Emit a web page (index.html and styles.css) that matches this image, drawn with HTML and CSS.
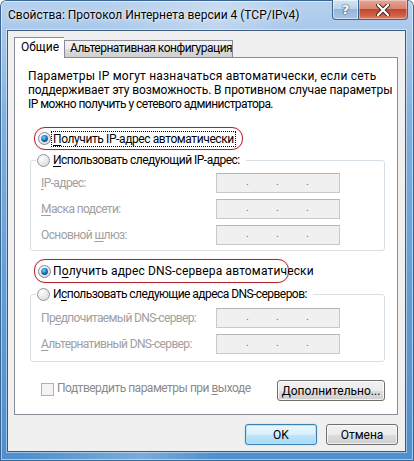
FILE: index.html
```html
<!DOCTYPE html>
<html lang="ru">
<head>
<meta charset="utf-8">
<link rel="stylesheet" href="styles.css">
</head>
<body>
<div class="window">
  <div class="titlebar">
    <div class="title">Свойства: Протокол Интернета версии 4 (TCP/IPv4)</div>
    <div class="caption-btns">
      <div class="cbtn help">?</div>
      <div class="cbtn close">
        <svg width="14" height="12" viewBox="0 0 14 12"><path d="M2 1 L12 11 M12 1 L2 11" stroke="#3a1a14" stroke-width="4" stroke-linecap="round"/><path d="M2 1 L12 11 M12 1 L2 11" stroke="#fff" stroke-width="2.4" stroke-linecap="round"/></svg>
      </div>
    </div>
  </div>
  <div class="client">
    <div class="tabs">
      <div class="tab active">Общие</div>
      <div class="tab alt">Альтернативная конфигурация</div>
    </div>
    <div class="panel">
      <p class="desc"><span class="l1">Параметры IP могут назначаться автоматически, если сеть</span><br><span class="l2">поддерживает эту возможность. В противном случае параметры</span><br><span class="l3">IP можно получить у сетевого администратора.</span></p>

      <div class="hl hl1">
        <svg class="radio" width="13" height="13" viewBox="0 0 13 13"><defs><radialGradient id="rg1" cx="0.35" cy="0.3" r="0.8"><stop offset="0" stop-color="#ffffff"/><stop offset="1" stop-color="#d8d8d8"/></radialGradient><radialGradient id="dot1" cx="0.4" cy="0.35" r="0.7"><stop offset="0" stop-color="#7fd0ff"/><stop offset="0.6" stop-color="#1a78c2"/><stop offset="1" stop-color="#0a3d6e"/></radialGradient></defs><circle cx="6.5" cy="6.5" r="6" fill="url(#rg1)" stroke="#7e8a96"/><circle cx="6.5" cy="6.5" r="3.4" fill="url(#dot1)"/></svg>
        <span class="focus"><u>П</u>олучить IP-адрес автоматически</span>
      </div>

      <div class="group g1">
        <div class="legend">
          <svg class="radio" width="13" height="13" viewBox="0 0 13 13"><circle cx="6.5" cy="6.5" r="6" fill="url(#rg1)" stroke="#8f989f"/></svg>
          <span class="ltext"><u>И</u>спользовать следующий IP-адрес:</span>
        </div>
        <div class="field first"><span class="flabel"><u>I</u>P-адрес:</span><div class="ip"><span>.</span><span>.</span><span>.</span></div></div>
        <div class="field"><span class="flabel"><u>М</u>аска подсети:</span><div class="ip"><span>.</span><span>.</span><span>.</span></div></div>
        <div class="field"><span class="flabel">Основной <u>ш</u>люз:</span><div class="ip"><span>.</span><span>.</span><span>.</span></div></div>
      </div>

      <div class="hl hl2">
        <svg class="radio" width="13" height="13" viewBox="0 0 13 13"><circle cx="6.5" cy="6.5" r="6" fill="url(#rg1)" stroke="#7e8a96"/><circle cx="6.5" cy="6.5" r="3.4" fill="url(#dot1)"/></svg>
        <span class="rtext">П<u>о</u>лучить адрес DNS-сервера автоматически</span>
      </div>

      <div class="group g2">
        <div class="legend">
          <svg class="radio" width="13" height="13" viewBox="0 0 13 13"><circle cx="6.5" cy="6.5" r="6" fill="url(#rg1)" stroke="#8f989f"/></svg>
          <span class="ltext">И<u>с</u>пользовать следующие адреса DNS-серверов:</span>
        </div>
        <div class="field first"><span class="flabel">Пр<u>е</u>дпочитаемый DNS-сервер:</span><div class="ip"><span>.</span><span>.</span><span>.</span></div></div>
        <div class="field"><span class="flabel"><u>А</u>льтернативный DNS-сервер:</span><div class="ip"><span>.</span><span>.</span><span>.</span></div></div>
      </div>

      <div class="bottom-row">
        <span class="check"></span>
        <span class="clabel">Подтвердить параметры при <u>в</u>ыходе</span>
        <div class="btn adv"><u>Д</u>ополнительно...</div>
      </div>
    </div>
    <div class="dlg-btns">
      <div class="btn default">OK</div>
      <div class="btn">Отмена</div>
    </div>
  </div>
</div>
</body>
</html>
```
FILE: styles.css
```css
* { box-sizing: border-box; }
html, body { margin: 0; padding: 0; }
body {
  width: 414px;
  height: 461px;
  overflow: hidden;
  font-family: Roboto, "Noto Sans", sans-serif;
  font-size: 12px;
  color: #000;
  background: #fff;
}
u { text-decoration: underline; text-underline-offset: 2px; }

.window {
  width: 414px;
  height: 461px;
  display: flex;
  flex-direction: column;
  padding: 0 8px 9px 7px;
  border-radius: 6px 6px 0 0;
  background:
    linear-gradient(100deg, rgba(255,255,255,0) 20%, rgba(255,255,255,0.25) 45%, rgba(255,255,255,0) 60%),
    linear-gradient(to bottom, #b6d1ee 0px, #a9c8ea 30px, #7fb0e0 120px, #5f9dd6 300px, #4e8fcd 461px);
  box-shadow: inset 0 0 0 1px #3b6591, inset 0 0 0 2px rgba(255,255,255,0.5);
}

.titlebar {
  height: 30px;
  display: flex;
  align-items: flex-start;
  flex: none;
}
.title {
  margin-left: 1px;
  padding-top: 7px;
  line-height: 16px;
  white-space: nowrap;
  text-shadow: 0 0 6px rgba(255,255,255,0.9), 0 0 2px rgba(255,255,255,0.9);
}
.caption-btns {
  margin-left: auto;
  margin-right: -2px;
  display: flex;
}
.cbtn {
  height: 20px;
  display: flex;
  align-items: center;
  justify-content: center;
  border: 1px solid #41648e;
  border-top: none;
}
.help {
  width: 27px;
  border-radius: 0 0 0 4px;
  background: linear-gradient(to bottom, #d3e3f3 0%, #bdd3ea 45%, #94b6da 50%, #a6c6e6 100%);
  color: #fff;
  font-family: "DejaVu Sans", sans-serif;
  font-weight: bold;
  font-size: 13px;
  text-shadow: 0 0 2px #23456b, 0 0 1px #23456b;
  box-shadow: inset 0 0 0 1px rgba(255,255,255,0.5);
}
.close {
  width: 49px;
  border-left: none;
  border-radius: 0 0 4px 0;
  background: linear-gradient(to bottom, #e4a898 0%, #d88470 45%, #c4452e 50%, #d0644c 85%, #e08a70 100%);
  box-shadow: inset 0 0 0 1px rgba(255,255,255,0.35);
}

.client {
  flex: 1;
  background: #f0f0f0;
  border: 1px solid #3d5a7c;
  box-shadow: 0 0 0 1px rgba(255,255,255,0.45);
  padding-top: 6px;
  display: flex;
  flex-direction: column;
}

.tabs {
  display: flex;
  align-items: flex-end;
  margin-left: 6px;
  height: 20px;
  position: relative;
  z-index: 1;
}
.tab {
  height: 17px;
  padding: 0 5px;
  line-height: 15px;
  border: 1px solid #898c95;
  border-bottom: none;
  background: linear-gradient(to bottom, #f3f3f3 0%, #ebebeb 50%, #dddddd 51%, #cfcfcf 100%);
  white-space: nowrap;
}
.tab.alt { width: 169px; letter-spacing: -0.5px; }
.tab.active {
  height: 21px;
  width: 50px;
  margin-bottom: -1px;
  background: #fff;
  border-right: none;
  padding: 0 0 0 6px;
  line-height: 18px;
}

.panel {
  margin-left: 6px;
  width: 384px;
  height: 358px;
  background: #fff;
  border: 1px solid #898c95;
  display: flex;
  flex-direction: column;
  align-items: flex-start;
}

.desc {
  margin: 11px 0 0 13px;
  line-height: 14px;
  white-space: nowrap;
}
.desc .l1 { letter-spacing: 0.2px; }
.desc .l2 { letter-spacing: -0.1px; }
.desc .l3 { letter-spacing: -0.55px; }

.hl {
  display: flex;
  align-items: center;
  border: 1px solid #b4232f;
  border-radius: 11px;
  box-shadow: 0 0 1px rgba(180,35,47,0.5);
  margin-left: 19px;
  padding-left: 3px;
  white-space: nowrap;
}
.hl1 { margin-top: 16px; width: 209px; height: 23px; }
.hl2 { margin-top: 8px; width: 255px; height: 24px; }
.radio { flex: none; display: block; }
.focus {
  margin-left: 1px;
  padding: 0 1px;
  line-height: 14px;
  outline: 1px dotted #000;
  outline-offset: 0;
  letter-spacing: -0.4px;
}
.rtext { margin-left: 2px; letter-spacing: 0.15px; }

.group {
  margin-left: 15px;
  width: 355px;
  border: 1px solid #d5dfe5;
  border-radius: 3px;
  display: flex;
  flex-direction: column;
  align-items: stretch;
}
.g1 { margin-top: 10px; padding-bottom: 5px; }
.g2 { margin-top: 11px; padding-bottom: 7px; }
.legend {
  margin-top: -9px;
  margin-left: 5px;
  align-self: flex-start;
  height: 16px;
  display: flex;
  align-items: center;
  background: #fff;
  padding: 0 6px 0 1px;
  white-space: nowrap;
}
.ltext { margin-left: 3px; letter-spacing: -0.5px; }
.g2 .ltext { letter-spacing: -0.55px; }

.field {
  display: flex;
  align-items: center;
  height: 20px;
  margin-top: 6px;
  padding-left: 10px;
  padding-right: 44px;
}
.g1 .field.first { margin-top: 5px; }
.g2 .field.first { margin-top: 6px; }
.flabel { color: #a0a0a0; white-space: nowrap; letter-spacing: -0.65px; }
.g1 .flabel { letter-spacing: -0.6px; }
.ip {
  margin-left: auto;
  width: 124px;
  height: 20px;
  background: #f0f0f0;
  border: 1px solid #c9c9c9;
  border-top-color: #b5b5b5;
  display: flex;
  padding-left: 2px;
}
.ip span {
  width: 30px;
  text-align: right;
  color: #6d6d6d;
  font-size: 11px;
  line-height: 15px;
}

.bottom-row {
  margin-top: 18px;
  width: 100%;
  display: flex;
  align-items: center;
  height: 21px;
}
.check {
  margin-left: 26px;
  width: 13px;
  height: 13px;
  border: 1px solid #b1b1b1;
  background: #f4f4f4;
  margin-top: -3px;
}
.clabel { margin-left: 3px; color: #8a8a8a; margin-top: -5px; white-space: nowrap; letter-spacing: -0.5px; }

.btn {
  height: 21px;
  display: flex;
  align-items: center;
  justify-content: center;
  border: 1px solid #707070;
  border-radius: 3px;
  background: linear-gradient(to bottom, #f2f2f2 0%, #ebebeb 50%, #dddddd 51%, #cfcfcf 100%);
  box-shadow: inset 0 0 0 1px rgba(255,255,255,0.7);
  white-space: nowrap;
}
.adv { margin-left: auto; margin-right: 12px; width: 108px; }

.dlg-btns {
  margin-top: 9px;
  display: flex;
  justify-content: flex-end;
  gap: 9px;
  padding-right: 7px;
}
.dlg-btns .btn { width: 72px; }
.btn.default {
  border-color: #3c7fb1;
  background: linear-gradient(to bottom, #eaf6fd 0%, #d9f0fc 50%, #bee6fd 51%, #a7d9f5 100%);
  box-shadow: inset 0 0 0 1px #b8e3f8, 0 0 1px #48a8e0;
}
```
